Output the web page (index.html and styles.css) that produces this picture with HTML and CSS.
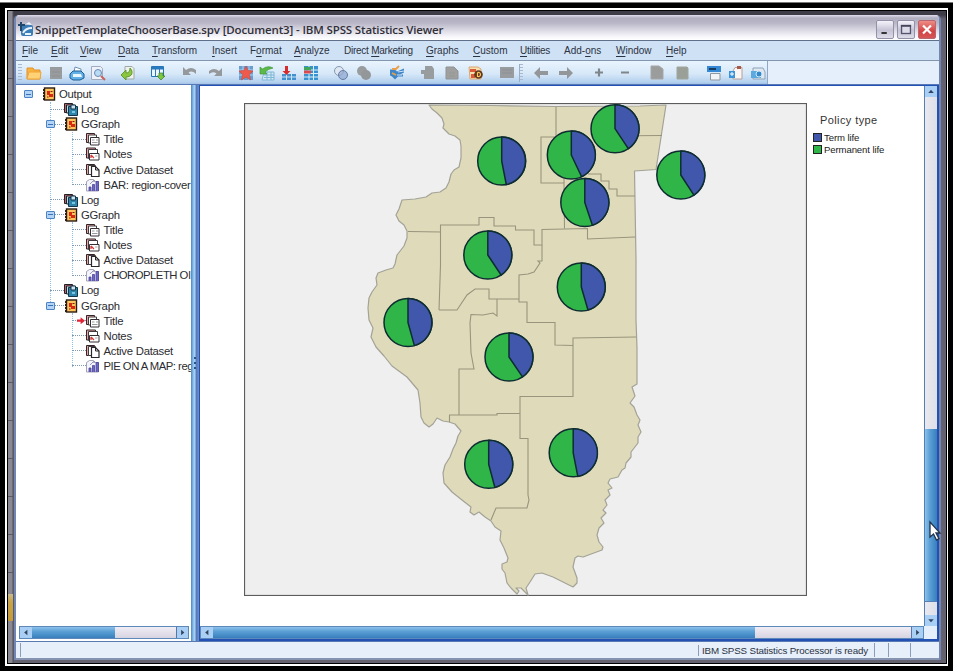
FILE: index.html
```html
<!DOCTYPE html>
<html lang="en">
<head>
<meta charset="utf-8">
<title>SnippetTemplateChooserBase.spv [Document3] - IBM SPSS Statistics Viewer</title>
<link rel="stylesheet" href="styles.css">
</head>
<body>
<svg class="defs" width="0" height="0" aria-hidden="true">
  <symbol id="book" viewBox="0 0 16 14"><path d="M2 3h1M2 6h1M2 9h1M2 12h1" stroke="#222" stroke-width="2"/><rect x="3.5" y="1" width="10" height="12" fill="#ffc45c" stroke="#2a1c10" stroke-width="1.4"/><path d="M6 4h3v3h3v3H8V8H6z" fill="#d62a12"/><path d="M9.5 4.5h2M6 10h1.500" stroke="#7d1a0c"/></symbol>
  <symbol id="log" viewBox="0 0 16 14"><path d="M1.500 1.500h8v9h-8z" fill="#b9676b" stroke="#252028"/><path d="M3.500 3h8v8h-8z" fill="#b8dbe8" stroke="#252028"/><path d="M5.500 4.500h9v9h-9z" fill="#2e86ad" stroke="#173549"/><path d="M8 3h4.500v4H8z" fill="#c9e6f0" stroke="#173549"/><path d="M9 10h3" stroke="#79c7e2" stroke-width="2"/></symbol>
  <symbol id="title" viewBox="0 0 16 14"><path d="M1.500 1.500h8v9h-8z" fill="#e7a4a2" stroke="#332529"/><path d="M3.500 3h8v8h-8z" fill="#fff" stroke="#423c40"/><path d="M5.500 5.500h8.500v7.500h-8.500z" fill="#fff" stroke="#332f33"/><path d="M7 8h2.500m1.500 0h2M7 10.500h5.500" stroke="#999"/></symbol>
  <symbol id="notes" viewBox="0 0 16 14"><path d="M1.500 1h9v10h-9z" fill="#e7a4a2" stroke="#332529"/><path d="M3.500 2.500h9v9h-9z" fill="#fff" stroke="#423c40"/><path d="M4.500 6.500h9.500V13H4.500z" fill="#fff" stroke="#332f33"/><path d="M6 8l3 3M6 11V8" stroke="#d23a3a" stroke-width="1.300"/><path d="M10 9h2.500" stroke="#aaa"/></symbol>
  <symbol id="data" viewBox="0 0 16 14"><path d="M1.500 1.500h8v10h-8z" fill="#e7a4a2" stroke="#332529"/><path d="M3.500 2.500h7v9h-7z" fill="#fff" stroke="#423c40"/><path d="M6.500 3.500H10.500L14 7v6.500H6.500z" fill="#fff" stroke="#2b282b" stroke-width="1.200"/><path d="M10.500 3.500V7H14" fill="none" stroke="#2b282b"/></symbol>
  <symbol id="chart" viewBox="0 0 16 14"><path d="M1.500 3.500l3-2h4v2h5V13h-12z" fill="#f4f4fb" stroke="#a3a2b8"/><path d="M4 13V9h2v4M7.500 13V6.500h2V13M11 13V3.500h2.500V13" fill="#6d67c4" stroke="#4b449c" stroke-width=".8"/><path d="M5 6l4-4 2 2" stroke="#9a97c0" fill="none"/></symbol>
  <symbol id="doc" viewBox="0 0 16 16"><path d="M2 2h8l4 4v8H2z" fill="#9f9f9f" stroke="#8f9395"/><path d="M5 8h6M5 11h6" stroke="#949894"/></symbol>
</svg>
<div class="frame"><div class="mat"><div class="desktop">
<div class="window">
  <header class="titlebar">
    <svg class="app" viewBox="0 0 16 16"><rect x="4" y="4" width="12" height="11" rx="2" fill="#3c7db8"/><path d="M6 12c2-4 5-5 9-5M8 13h6" stroke="#e8f4fc" stroke-width="1.800" fill="none"/><path d="M1 4h7M4 1v9" stroke="#20486d" stroke-width="2"/><path d="M9 3l3-2 3 3" fill="#eef6ff"/></svg>
    <h1>SnippetTemplateChooserBase.spv [Document3] - IBM SPSS Statistics Viewer</h1>
    <div class="winbtns">
      <svg class="wb" viewBox="0 0 18 19"><path d="M5 13.500h6" stroke="#333" stroke-width="2.400"/></svg>
      <svg class="wb" viewBox="0 0 18 19"><rect x="4" y="5" width="10" height="9" fill="#dcdbe8" stroke="#55546c" stroke-width="1.500"/><path d="M3.300 5.500h11.400" stroke="#45445a" stroke-width="2"/></svg>
      <svg class="wb close" viewBox="0 0 18 19"><path d="M4.500 5l9 9M13.500 5l-9 9" stroke="#fff" stroke-width="2.400"/></svg>
    </div>
  </header>
  <nav class="menu">
    <span><u>F</u>ile</span><span><u>E</u>dit</span><span><u>V</u>iew</span><span><u>D</u>ata</span><span><u>T</u>ransform</span><span><u>I</u>nsert</span><span>F<u>o</u>rmat</span><span><u>A</u>nalyze</span><span class="tight">Direct <u>M</u>arketing</span><span><u>G</u>raphs</span><span><u>C</u>ustom</span><span class="tight"><u>U</u>tilities</span><span>Add-<u>o</u>ns</span><span><u>W</u>indow</span><span><u>H</u>elp</span>
  </nav>
  <div class="toolbar">
    <div class="tools">
      <i class="grip"></i>
      <svg viewBox="0 0 16 16"><path d="M1 3h6l1 2h6v9H1z" fill="#f7b33d" stroke="#e3912a"/><path d="M3 7h12l-1 7H1z" fill="#ffd276" stroke="#efa437"/></svg>
      <svg class="m6" viewBox="0 0 16 16"><path d="M2 2h12v12H2z" fill="#999c9e"/><path d="M4 7h8M4 11h8" stroke="#8c8f91"/></svg>
      <svg class="m5" viewBox="0 0 16 16"><path d="M5 7l1-5 6 2v4" fill="#fff" stroke="#6f92b5"/><path d="M1 9l3-3h8l3 3v4l-4 2H4l-3-2z" fill="#62b0e6" stroke="#1b5c94"/><path d="M4 9h8l1 3H4z" fill="#e8f6ff"/></svg>
      <svg class="m5" viewBox="0 0 16 16"><path d="M1.500 1.500h9l2 2v11h-11z" fill="#edf2fa" stroke="#a3abc0"/><circle cx="8" cy="8" r="3.500" fill="#b7dcf4" stroke="#6d89b4"/><path d="M11 11l4 4" stroke="#c4625c" stroke-width="2"/></svg>
      <svg class="m14" viewBox="0 0 16 16"><path d="M5 1.500h7l2 2V14H5z" fill="#eef1ee" stroke="#9fa9a4"/><path d="M1 10l5-5v3c3 0 4-2 4-5 4 4 2 9-4 9v3z" fill="#8cc63f" stroke="#5d9b35"/></svg>
      <svg class="m14" viewBox="0 0 16 16"><path d="M1.500 1.500h12v10h-12z" fill="#eef7ff" stroke="#2376b7"/><path d="M2 3h11" stroke="#2979bd" stroke-width="3"/><path d="M5.500 3v8M9.500 3v8" stroke="#2979bd"/><path d="M9 8h4v3h2l-4 4-4-4h2z" fill="#7ec83d" stroke="#397a2b" stroke-width=".7"/></svg>
      <svg class="m16" viewBox="0 0 16 16"><path d="M1 2v8h8L6.500 7.500Q10 5 14 9V5Q9 1 4 5z" fill="#96999c"/></svg>
      <svg class="m9" viewBox="0 0 16 16"><path d="M15 3v8H7l2.500-2.500Q6 6 2 9V6Q7 2 12 6z" fill="#96999c"/></svg>
      <svg class="m15" viewBox="0 0 16 16"><rect x="1" y="1" width="14" height="14" fill="#6a9dce"/><path d="M1 5h14M1 10h14M5 1v14M11 1v14" stroke="#a8d0ee"/><path d="M8 1l2 4.500 5 .5-3.700 3.500L12.500 15 8 12l-4.500 3 1.200-5.500L1 6l5-.5z" fill="#ee5b4c" stroke="#c9433b" stroke-width=".6"/></svg>
      <svg class="m5" viewBox="0 0 16 16"><path d="M5 7h10v8H3z" fill="#d4e8f5" stroke="#7fb6d6"/><path d="M5 10h10M5 12.500h10M8 7v8M12 7v8" stroke="#7fb6d6"/><path d="M1 9V2l2.500 2Q9 0 14 3 9 4 6 7l2 2z" fill="#5cba47" stroke="#429844" stroke-width=".7"/></svg>
      <svg class="m6" viewBox="0 0 16 16"><path d="M1 9h14v6H1z" fill="#4390ce"/><path d="M1 12h14M5.500 9v6M10.500 9v6" stroke="#cae4f7"/><path d="M4 1h3v5h2.500l-4 4-4-4H4z" fill="#d72c2c"/></svg>
      <svg class="m6" viewBox="0 0 16 16"><rect x="1" y="1" width="14" height="14" fill="#3a91cf"/><path d="M1 5h14M1 8.500h14M1 12h14M6 1v14M10.500 1v14" stroke="#d8effc"/><path d="M1 2h7v3H1z" fill="#41a65a"/><path d="M1 5.500h7v3H1z" fill="#d94b4b"/></svg>
      <svg class="m14" viewBox="0 0 16 16"><circle cx="6" cy="6" r="4.500" fill="#dfe8f2" stroke="#8698b0"/><circle cx="10" cy="10" r="4.500" fill="#91a9d0" fill-opacity=".75" stroke="#667da5"/></svg>
      <svg class="m7" viewBox="0 0 16 16"><circle cx="6" cy="6" r="5" fill="#999c9e"/><circle cx="10" cy="10" r="5" fill="#939799"/></svg>
      <svg class="m17" viewBox="0 0 16 16"><path d="M1 4.500h5l2 2 7-3v4l-4 2h3v2H9l-3 3-3-3-2-1z" fill="#3f86c8"/><path d="M9 7l6-1M8 10h5" stroke="#cfe4f5"/><path d="M3 4h4l3-3M3 8l4 2" stroke="#e9a04a" stroke-width="1.800" fill="none"/></svg>
      <svg class="m15" viewBox="0 0 16 16"><path d="M5 1h7l2 3v10H4V9H1V5h4z" fill="#999c9e"/></svg>
      <svg class="m8" viewBox="0 0 16 16"><use href="#doc"/></svg>
      <svg class="m8" viewBox="0 0 16 16"><path d="M1 2h9l3 2v10H2z" fill="#f7dfae" stroke="#d8a874"/><path d="M2 4h6v3H2zM3 9h4v4H3z" fill="#dc5a3a"/><circle cx="10.500" cy="9.500" r="4.300" fill="#5f3720"/><path d="M9.500 7.500v4c4 1 4-5 0-4" stroke="#ffc657" stroke-width="1.200" fill="none"/></svg>
      <svg class="m15" viewBox="0 0 16 16"><path d="M1 2h14v11H1z" fill="#989c9f"/><path d="M3 5h10M3 8h10" stroke="#8d9194"/></svg>
      <i class="grip mid"></i>
      <svg class="m10" viewBox="0 0 16 16"><path d="M1 8l6-6v4h8v4H7v4z" fill="#93979a"/></svg>
      <svg class="m9" viewBox="0 0 16 16"><path d="M15 8L9 2v4H1v4h8v4z" fill="#93979a"/></svg>
      <svg class="m17" viewBox="0 0 16 16"><path d="M4 7.500h8M8 3.500v8" stroke="#7f868b" stroke-width="2.200"/></svg>
      <svg class="m10" viewBox="0 0 16 16"><path d="M4 7.500h8" stroke="#7f868b" stroke-width="2.200"/></svg>
      <svg class="m16" viewBox="0 0 16 16"><path d="M2 1h8l4 3v10H2z" fill="#9b9c9c" stroke="#a6a7a6"/></svg>
      <svg class="m9" viewBox="0 0 16 16"><path d="M3 2h10l1 1v11H3z" fill="#9a9f98" stroke="#a0a59e"/></svg>
      <svg class="m16" viewBox="0 0 16 16"><path d="M1 1h14v6H1z" fill="#3589d4"/><path d="M3 4h7" stroke="#173c63" stroke-width="2"/><path d="M4.500 8.500h9.500V15H4.500z" fill="#f2f4f6" stroke="#8f979f"/></svg>
      <svg class="m6" viewBox="0 0 16 16"><path d="M7 2.500h7V14H5V6z" fill="#fbf6f4" stroke="#b1a19d"/><path d="M9 1h4v3H9z" fill="#a95947"/><path d="M1 6h6v7H1z" fill="#3b94d9"/><path d="M4 7v4M2 9h4" stroke="#fff"/></svg>
      <svg class="m6" viewBox="0 0 16 16"><path d="M3 3h10l2 4v7H3z" fill="#e0e7ee" stroke="#8da2b7"/><path d="M1 6h10v7H1z" fill="#5ba9df"/><circle cx="9" cy="9" r="3" fill="#3688ca" stroke="#cfeafc"/></svg>
    </div>
  </div>
  <main class="body">
    <aside class="outline">
      <div class="tree">
        <div class="row l0"><b class="box"></b><svg><use href="#book"/></svg><span>Output</span></div>
        <div class="branch">
          <div class="row l1"><b></b><svg><use href="#log"/></svg><span>Log</span></div>
          <div class="row l1"><b class="box"></b><svg><use href="#book"/></svg><span>GGraph</span></div>
          <div class="leaves">
            <div class="row l2"><b></b><svg><use href="#title"/></svg><span>Title</span></div>
            <div class="row l2"><b></b><svg><use href="#notes"/></svg><span>Notes</span></div>
            <div class="row l2"><b></b><svg><use href="#data"/></svg><span>Active Dataset</span></div>
            <div class="row l2"><b></b><svg><use href="#chart"/></svg><span class="fit">BAR: region-cover</span></div>
          </div>
          <div class="row l1"><b></b><svg><use href="#log"/></svg><span>Log</span></div>
          <div class="row l1"><b class="box"></b><svg><use href="#book"/></svg><span>GGraph</span></div>
          <div class="leaves">
            <div class="row l2"><b></b><svg><use href="#title"/></svg><span>Title</span></div>
            <div class="row l2"><b></b><svg><use href="#notes"/></svg><span>Notes</span></div>
            <div class="row l2"><b></b><svg><use href="#data"/></svg><span>Active Dataset</span></div>
            <div class="row l2"><b></b><svg><use href="#chart"/></svg><span class="caps">CHOROPLETH OI</span></div>
          </div>
          <div class="row l1"><b></b><svg><use href="#log"/></svg><span>Log</span></div>
          <div class="row l1"><b class="box"></b><svg><use href="#book"/></svg><span>GGraph</span></div>
        </div>
        <div class="leaves">
          <div class="row l2 current"><b></b><svg><use href="#title"/></svg><span>Title</span></div>
          <div class="row l2"><b></b><svg><use href="#notes"/></svg><span>Notes</span></div>
          <div class="row l2"><b></b><svg><use href="#data"/></svg><span>Active Dataset</span></div>
          <div class="row l2"><b></b><svg><use href="#chart"/></svg><span class="caps">PIE ON A MAP: reg</span></div>
        </div>
      </div>
      <div class="hscroll"><svg class="sb" viewBox="0 0 12 12"><path d="M7.500 3v6L4 6z"/></svg><i class="thumb left-thumb"></i><i class="track"></i><svg class="sb end" viewBox="0 0 12 12"><path d="M4.500 3v6L8 6z"/></svg></div>
    </aside>
    <div class="splitter"><i></i></div>
    <section class="viewer">
      <div class="content">
        <svg class="map" viewBox="244 103 563 493">
          <rect x="244.500" y="103.500" width="562" height="492" fill="#efefef" stroke="#5c5c5c" stroke-width="1.200"/>
          <path class="state" d="M429 105L432 109 437 113 442 118 444 124 443 128 449 134 455 136 460 140 461 146 461 158 459 167 454 170 451 174 449 182 446 188 440 192 432 193 426 197 415 199 402 200 399 209 396 215 399 221 404 225 407 231 407 238 404 246 397 255 395 264 393 268 386 270 378 273 376 278 377 285 372 292 369 298 368 308 369 320 373 328 371 337 376 347 384 356 392 366 407 377 418 390 420 403 421 417 424 423 429 427 433 424 437 418 443 421 449 422 455 424 461 431 458 436 456 443 453 449 450 457 445 465 443 473 444 483 452 492 462 500 471 507 470 512 474 515 479 512 485 517 491 521 495 527 501 531 500 540 504 548 508 558 507 562 502 564 502 569 505 573 507 583 511 588 517 594 519 591 516 588 521 588 528 595 526 588 530 582 535 574 542 573 553 577 573 587 577 583 577 578 573 567 575 558 578 556 583 557 602 550 603 547 599 542 597 535 599 528 604 523 601 518 606 513 603 510 607 505 605 500 610 495 608 490 612 488 608 483 610 479 618 477 622 470 625 468 626 463 631 457 631 452 638 443 638 437 641 432 638 425 640 420 637 415 634 407 630 403 635 396 632 387 637 384 637 348 636 320 636 260 634.500 171 656 169.500 666 105 640 106 555 106.500 490 105.500z"/>
          <g class="borders">
            <path d="M556 107v29.500M588 137h-47v46h23l.5 45.500M600 136l62-.5"/>
            <path d="M564 178V183M588 174h13v7h8v8h8v7h18"/>
            <path d="M408 231.500l33 .5M439 310l1.500-45V225H479v-7.500h15v8.500h21.500v4H534v15h8v-15.500l45.500-1v10.500L635 237"/>
            <path d="M542 245v16h-4l2 2-6 9-6 2-9 1v27h8v20.500h28V345l18 .5V338l63-1M573 345v51.500h-53V438.500h8V495l1 5-2 8H496l-5 12"/>
            <path d="M439 310h18l10-15 8-6h14v10h30M497 299v17l-4-3-10 2-12-.5-1 8.500 1 30 3 16h-15v46M449.500 422v-7H497v-1.500h23"/>
          </g>
          <g class="pies">
            <g transform="translate(501.700 161)"><circle r="24"/><path d="M0-24A24 24 0 0 1 4.600 23.500L0 0z"/></g>
            <g transform="translate(571.300 155)"><circle r="24"/><path d="M0-24A24 24 0 0 1 10.300 21.700L0 0z"/></g>
            <g transform="translate(615 128.700)"><circle r="24"/><path d="M0-24A24 24 0 0 1 13.300 20L0 0z"/></g>
            <g transform="translate(584.800 202.500)"><circle r="24"/><path d="M0-24A24 24 0 0 1 7.600 22.800L0 0z"/></g>
            <g transform="translate(680.800 175)"><circle r="24"/><path d="M0-24A24 24 0 0 1 13.100 20.100L0 0z"/></g>
            <g transform="translate(487.800 255)"><circle r="24"/><path d="M0-24A24 24 0 0 1 13.300 20L0 0z"/></g>
            <g transform="translate(408 322.500)"><circle r="24"/><path d="M0-24A24 24 0 0 1 6.400 23.100L0 0z"/></g>
            <g transform="translate(581.300 287)"><circle r="24"/><path d="M0-24A24 24 0 0 1 6.700 23L0 0z"/></g>
            <g transform="translate(509 357)"><circle r="24"/><path d="M0-24A24 24 0 0 1 13.500 19.800L0 0z"/></g>
            <g transform="translate(573.200 452.800)"><circle r="24"/><path d="M0-24A24 24 0 0 1 4.600 23.600L0 0z"/></g>
            <g transform="translate(488.700 464.300)"><circle r="24"/><path d="M0-24A24 24 0 0 1 6.200 23.200L0 0z"/></g>
          </g>
        </svg>
        <div class="legend">
          <h2>Policy type</h2>
          <p><i class="term"></i>Term life</p>
          <p><i class="perm"></i>Permanent life</p>
        </div>
      </div>
      <div class="vscroll"><svg class="sb" viewBox="0 0 12 12"><path d="M3 7.500h6L6 4z"/></svg><i class="track"></i><i class="thumb"></i><i class="track tail"></i><svg class="sb" viewBox="0 0 12 12"><path d="M3 4.500h6L6 8z"/></svg></div>
      <div class="hscroll"><svg class="sb" viewBox="0 0 12 12"><path d="M7.500 3v6L4 6z"/></svg><i class="thumb main-thumb"></i><i class="track"></i><svg class="sb end" viewBox="0 0 12 12"><path d="M4.500 3v6L8 6z"/></svg></div>
      <div class="corner"></div>
    </section>
  </main>
  <footer class="status"><i></i><span>IBM SPSS Statistics Processor is ready</span><i></i><i></i><i></i></footer>
</div>
</div></div></div>
<svg class="cursor" viewBox="0 0 14 22"><path d="M2 2v15l3.500-3 3 6 2.500-1.300-3-5.700h4z" fill="#fff" stroke="#23354e" stroke-width="1.300"/></svg>
</body>
</html>
```
FILE: styles.css
```css
* { box-sizing: border-box; }
body { margin: 0; width: 960px; height: 672px; overflow: hidden; background: #fff; position: relative; font-family: "Liberation Sans", Arial, sans-serif; color: #333; }
svg { display: block; flex: none; }
i, b { display: block; font-style: normal; flex: none; }
.defs { position: absolute; }
.frame { width: 953px; height: 668px; margin-top: 3px; background: #000; padding: 5px; box-shadow: 0 -1px #777; }
.mat { height: 100%; background: #fff; padding: 2px 1px 2px 2px; }
.desktop { height: 100%; border: 1px solid #000; padding: 4px 5px 3px 6px; background: linear-gradient(90deg, #89878f 0 4px, #4f4d59 5px, transparent 6px), linear-gradient(#3e3d47 0 4px, #63616f 8px, #64626f); position: relative; }
.desktop::before { content: ""; position: absolute; left: 0; top: 583px; width: 5px; height: 27px; background: linear-gradient(#c8b98f, #c7a347 30%, #c59b3a); }
.desktop::after { content: ""; position: absolute; left: 0; top: 0; width: 5px; height: 580px; background: repeating-linear-gradient(transparent 0 29px, #5c5963 29px 30px, transparent 30px 38px); }
.window { height: 645px; display: flex; flex-direction: column; border: solid #7186b2; border-width: 0 2px 0; border-radius: 5px 5px 0 0; background: #dfebf8; overflow: hidden; }
.titlebar { height: 25px; display: flex; align-items: center; background: linear-gradient(#e0deec 0, #b1aec0 3px, #b9b6c7 8px, #d6d4df 14px, #f8f8fc 22px, #fff); padding: 3px 3px 0 1px; }
.app { width: 16px; height: 16px; margin-right: 2px; }
h1 { margin: 1px 0 0; font: 600 11.5px/18px "Open Sans", "Noto Sans", sans-serif; letter-spacing: -.14px; color: #302f38; white-space: nowrap; }
.winbtns { margin-left: auto; display: flex; gap: 3px; }
.wb { width: 18px; height: 19px; border: 1px solid #9391a8; border-radius: 2px; background: linear-gradient(#f4f3fa, #c5c3d5 55%, #dddce8); }
.close { background: linear-gradient(#ee8c86, #d34343 60%, #d75555); border-color: #b76770; }
.menu { height: 20px; border-top: 1px solid #60708a; display: grid; grid-template-columns: 29px 29px 38px 34px 60px 38px 44px 50px 82px 47px 47px 44px 52px 50px 40px; padding-left: 6px; font-size: 10px; line-height: 20px; background: #cfe1f5; white-space: nowrap; color: #2c3342; }
.menu u { text-underline-offset: 2px; }
.menu .tight { letter-spacing: -.25px; }
.toolbar { height: 25px; border-top: 1px solid #8496ae; border-bottom: 1px solid #5779b6; background: #e5effb; }
.tools { height: 100%; width: 752px; display: flex; align-items: center; padding-left: 2px; background: linear-gradient(#e9f4fe, #d7e8f8 55%, #b4d1ee 92%, #a2c1e4); border-right: 1px solid #8fa8c8; }
.tools svg { width: 16px; height: 16px; }
.grip { width: 4px; height: 18px; margin-right: 4px; background: repeating-linear-gradient(#a8bad0 0 1px, transparent 1px 3px); }
.grip.mid { margin: 0 0 0 4px; border-left: 1px solid #9aaec8; }
.m5 { margin-left: 5px; } .m6 { margin-left: 6px; } .m7 { margin-left: 7px; } .m8 { margin-left: 8px; } .m9 { margin-left: 9px; } .m10 { margin-left: 10px; }
.m14 { margin-left: 14px; } .m15 { margin-left: 15px; } .m16 { margin-left: 16px; } .m17 { margin-left: 17px; }
.body { height: 556px; display: flex; }
.outline { width: 175px; background: #fff; display: flex; flex-direction: column; padding: 1.500px 2px 2px 3px; }
.tree { flex: 1; overflow: hidden; margin-right: -2px; }
.row { height: 15.120px; display: flex; align-items: center; font-size: 11.300px; letter-spacing: -.24px; white-space: nowrap; position: relative; color: #2c2c30; }
.row b { width: 9px; height: 8px; margin-right: 8px; }
.row svg { width: 16px; height: 14px; margin-right: 2px; }
.row.l0 { padding-left: 5px; } .row.l1 { padding-left: 27px; } .row.l2 { padding-left: 49px; }
.row.l2 svg { margin-right: 2.500px; }
.row .fit { letter-spacing: -.32px; }
.row .caps { letter-spacing: -.5px; }
.box { border: 1px solid #4b83c7; background: linear-gradient(#3b72ba, #3b72ba) 1px 2.500px / 5px 1px no-repeat, #b4d4f6; z-index: 1; border-radius: 1px; }
.branch, .leaves { position: relative; }
.branch::before, .leaves::before { content: ""; position: absolute; top: 0; bottom: 7px; left: 31px; border-left: 1px dotted #8fbfe2; }
.leaves::before { left: 53px; }
.l1::before, .l2::before { content: ""; position: absolute; left: 31px; top: 7px; width: 14px; border-top: 1px dotted #7f99b5; }
.l2::before { left: 53px; }
.current::after { content: ""; position: absolute; left: 58px; top: 4px; width: 8px; height: 7px; background: #df2435; clip-path: polygon(0 35%, 45% 35%, 45% 0, 100% 50%, 45% 100%, 45% 65%, 0 65%); }
.hscroll { height: 13px; display: flex; border: 1px solid #5d88ba; background: #ddd9e6; }
.sb { width: 12px; height: 11px; background: #a9cff4; fill: #34435d; }
.end { border-left: 1px solid #5876a5; }
.track { flex: 1; background: linear-gradient(#f1edf4, #d7d4e2); }
.thumb { background: linear-gradient(#8dc2ec, #5b9fd5 40%, #377fbd); }
.left-thumb { width: 83px; }
.main-thumb { width: 542px; }
.splitter { width: 8px; background: linear-gradient(90deg, #5b93c8 0 1px, #8dc3ee 2px 3px, #b8dcf8 4px, #5276b8 5px, #6c8fcb); display: flex; align-items: center; justify-content: center; }
.splitter i { width: 2px; height: 12px; background: repeating-linear-gradient(#2d5288 0 2px, transparent 2px 5px); }
.viewer { flex: 1; display: grid; grid-template: 1fr 13px / 1fr 13px; background: #fff; border: solid #2350b4; border-width: 1px 2px 2px 1px; }
.content { padding: 17px 0 0 44px; display: flex; min-height: 0; min-width: 0; }
.map { width: 563px; height: 493px; }
.state { fill: #dfdbba; stroke: #a3a297; stroke-width: 1.200; stroke-linejoin: round; }
.borders { fill: none; stroke: #99947d; stroke-width: 1.100; }
.pies { stroke: #0e2d31; stroke-width: 1.500; stroke-linejoin: round; }
.pies circle { fill: #2fb548; }
.pies path { fill: #4057ab; }
.legend { padding: 10px 0 0 6px; white-space: nowrap; }
.legend h2 { margin: 0 0 4px 7px; font-size: 11px; line-height: 14px; font-weight: 400; letter-spacing: .4px; color: #333; }
.legend p { margin: 0; height: 12.500px; display: flex; align-items: center; font-size: 9.600px; letter-spacing: -.12px; color: #222; }
.legend i { width: 9px; height: 9px; border: 1px solid #222; margin-right: 2px; }
.term { background: #4057ab; } .perm { background: #2fb548; }
.vscroll { display: flex; flex-direction: column; border-left: 1px solid #5480b4; }
.vscroll .thumb { height: 172px; background: linear-gradient(90deg, #8dc2ec, #5b9fd5 40%, #377fbd); }
.vscroll .track { background: linear-gradient(90deg, #eae8f1, #dedfe8); }
.vscroll .tail { flex: none; height: 14px; border-top: 1px solid #5480b4; }
.corner { background: #e5eefb; }
.status { height: 19px; display: flex; align-items: center; border-top: 1px solid #587ab0; border-bottom: 2px solid #8794b1; background: #e7effb; font-size: 9.800px; letter-spacing: -.16px; color: #2c3342; white-space: nowrap; }
.status i { width: 1px; height: 14px; background: #8c9db8; margin-left: 4px; }
.status span { margin-left: 677px; border-left: 1px solid #8c9db8; padding-left: 3px; width: 172px; }
.status i + i { margin-left: 13px; } .status i:last-child { margin-left: 21px; }
.cursor { position: absolute; left: 928px; top: 520px; width: 14px; height: 22px; }
```
